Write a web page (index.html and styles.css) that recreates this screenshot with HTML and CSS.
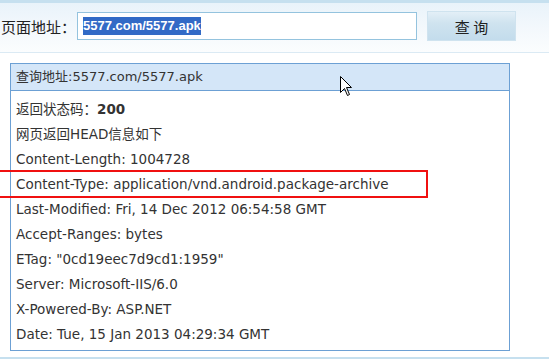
FILE: index.html
```html
<!DOCTYPE html>
<html>
<head>
<meta charset="utf-8">
<link rel="stylesheet" href="styles.css">
</head>
<body>
<div class="page">
  <div class="topbar">
    <span class="label">页面地址：</span>
    <div class="input"><span class="sel">5577.com/5577.apk</span></div>
    <div class="btn">查 询</div>
  </div>
  <div class="panel">
    <div class="panel-head">查询地址:5577.com/5577.apk</div>
    <div class="panel-body">
      <div class="row">返回状态码：<b>200</b></div>
      <div class="row">网页返回HEAD信息如下</div>
      <div class="row">Content-Length: 1004728</div>
      <div class="row">Content-Type: application/vnd.android.package-archive</div>
      <div class="row">Last-Modified: Fri, 14 Dec 2012 06:54:58 GMT</div>
      <div class="row">Accept-Ranges: bytes</div>
      <div class="row">ETag: "0cd19eec7d9cd1:1959"</div>
      <div class="row">Server: Microsoft-IIS/6.0</div>
      <div class="row">X-Powered-By: ASP.NET</div>
      <div class="row">Date: Tue, 15 Jan 2013 04:29:34 GMT</div>
    </div>
  </div>
  <div class="bottomline"></div>
  <div class="redbox"></div>
  <svg class="cursor" width="13" height="21" viewBox="0 0 13 21"><path d="M0.5 0.5 L0.5 16.5 L4.5 12.5 L7.5 19.5 L9.5 18.5 L6.5 11.5 L11.5 11.5 Z" fill="#fff" stroke="#000" stroke-width="1"/></svg>
</div>
</body>
</html>
```
FILE: styles.css
```css
html, body { margin: 0; padding: 0; background: #fff; }
.page {
  position: relative;
  width: 549px;
  height: 361px;
  overflow: hidden;
  font-family: "DejaVu Sans", Verdana, "Noto Sans CJK SC", sans-serif;
  color: #333;
}
.topbar {
  height: 49px;
  border-top: 3px solid #c6e0ef;
  border-bottom: 1px solid #dbeaf4;
  background: linear-gradient(to bottom, #e9f3fa 0%, #f3f8fc 50%, #fbfdfe 100%);
  display: flex;
  align-items: center;
}
.label {
  width: 77px;
  padding-left: 1px;
  box-sizing: border-box;
  font-family: "Noto Sans CJK SC", sans-serif;
  font-size: 15px;
  color: #222;
  margin-top: -3px;
}
.input {
  width: 340px;
  height: 28px;
  box-sizing: border-box;
  border: 1px solid #94c3de;
  background: #fff;
  display: flex;
  align-items: center;
  padding-left: 5px;
  margin-top: -3px;
}
.sel {
  background: #326ac6;
  color: #fff;
  font-family: "Liberation Sans", Arial, sans-serif;
  font-weight: bold;
  font-size: 13px;
  line-height: 18px;
}
.btn {
  margin-left: 10px;
  width: 89px;
  height: 30px;
  box-sizing: border-box;
  border: 1px solid #cfe3ef;
  background: linear-gradient(to bottom, #e3eff7 0%, #cfe3ef 40%, #c3dcec 100%);
  display: flex;
  align-items: center;
  justify-content: center;
  font-family: "Noto Sans CJK SC", sans-serif;
  font-size: 15px;
  color: #222;
  margin-top: -3px;
}
.panel {
  margin: 10px 0 0 10px;
  width: 500px;
  box-sizing: border-box;
  border: 1px solid #6ca0d4;
  font-size: 13px;
}
.panel-head {
  height: 26px;
  line-height: 26px;
  background: #d4e6f8;
  border-bottom: 1px solid #6ca0d4;
  padding-left: 5px;
  font-family: "DejaVu Sans", "Noto Sans CJK SC", sans-serif;
}
.panel-body {
  padding: 6px 0 3px 5px;
  font-size: 13.5px;
}
.row {
  height: 25px;
  line-height: 25px;
  white-space: nowrap;
}
.row b { font-weight: bold; }
.bottomline {
  margin-top: 6px;
  height: 2px;
  background: #c6e0ef;
}
.redbox {
  position: absolute;
  left: -4px;
  top: 170px;
  width: 432px;
  height: 28px;
  box-sizing: border-box;
  border: 2px solid #f01010;
}
.cursor {
  position: absolute;
  left: 340px;
  top: 76px;
}
```
